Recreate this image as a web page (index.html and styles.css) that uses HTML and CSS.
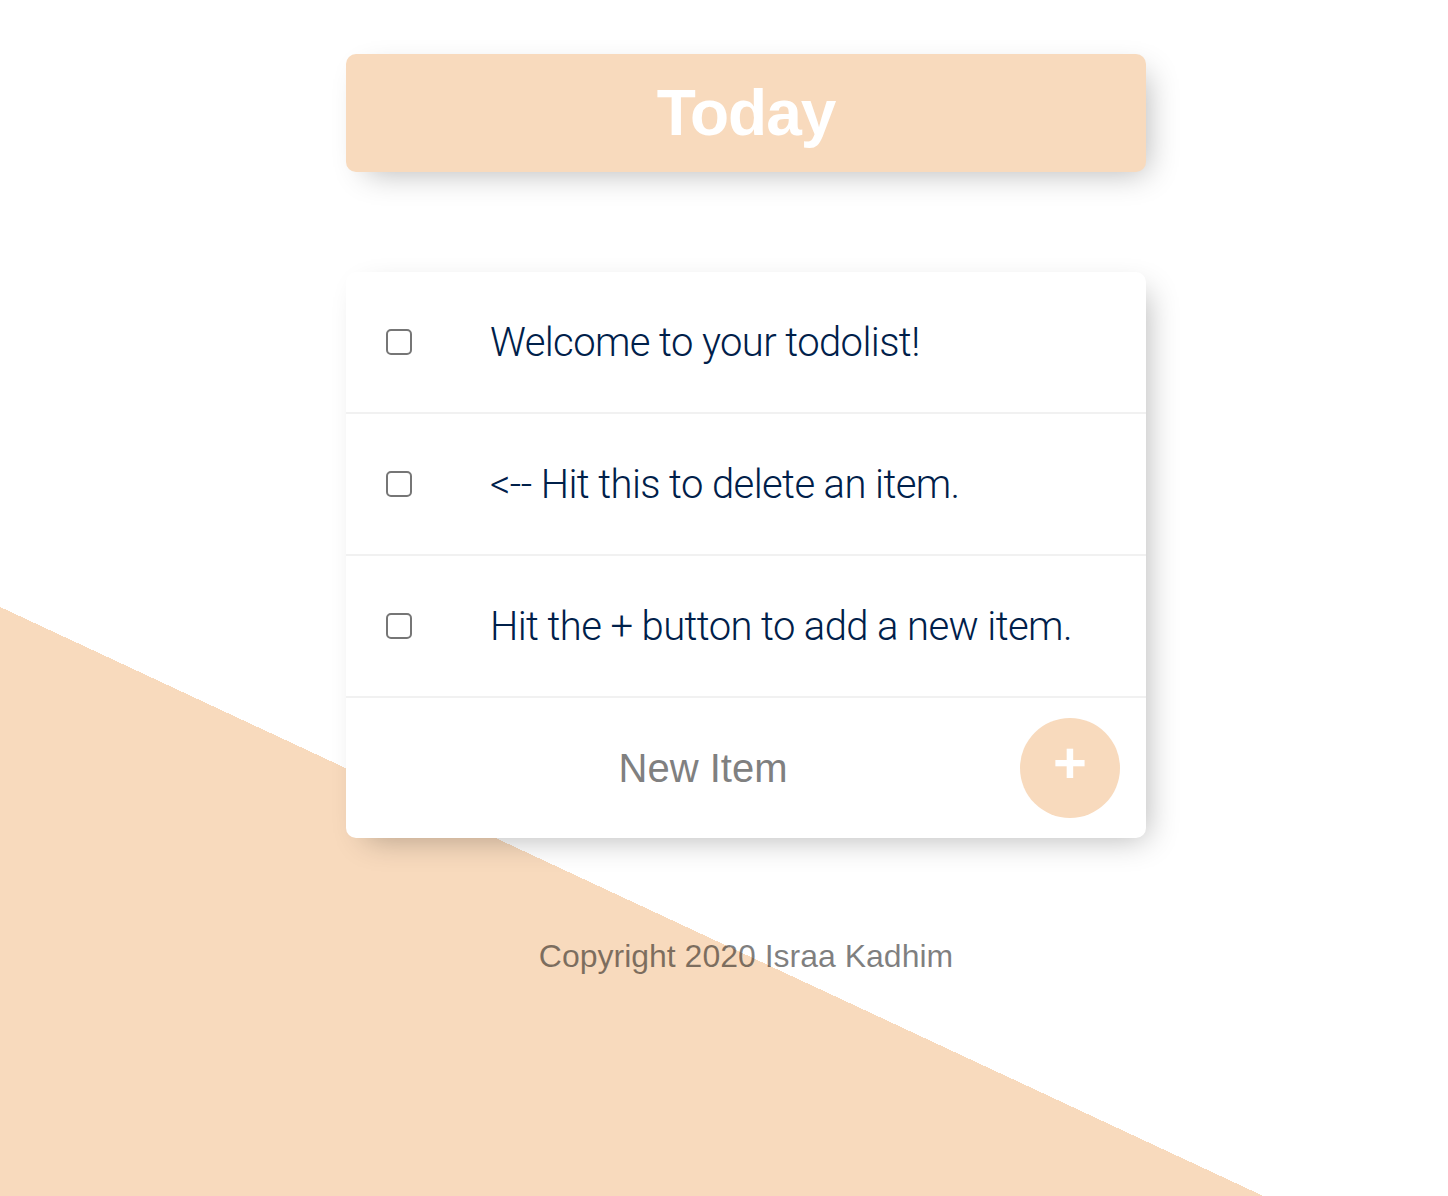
FILE: index.html
```html
<!DOCTYPE html>
<html lang="en">
<head>
<meta charset="utf-8">
<title>To-Do List</title>
<link rel="stylesheet" href="styles.css">
</head>
<body>
  <div class="box heading">
    <h1>Today</h1>
  </div>
  <div class="box list">
    <div class="item">
      <input type="checkbox">
      <p>Welcome to your todolist!</p>
    </div>
    <div class="item">
      <input type="checkbox">
      <p>&lt;-- Hit this to delete an item.</p>
    </div>
    <div class="item">
      <input type="checkbox">
      <p>Hit the + button to add a new item.</p>
    </div>
    <form class="item new-item" action="#">
      <input type="text" name="newItem" placeholder="New Item" autocomplete="off">
      <button type="button" name="list">+</button>
    </form>
  </div>
  <footer class="footer">Copyright 2020 Israa Kadhim</footer>
</body>
</html>
```

FILE: styles.css
```css
html {
  background-color: #fff;
  background-image: linear-gradient(25deg, #F8DABD 50%, #fff 50%);
  background-size: 1448px 1889px;
  background-position: 0 0;
  background-repeat: no-repeat;
  font-family: "Liberation Sans", Arial, sans-serif;
}

body {
  margin: 0;
  padding: 54px 0 0 44px;
}

.box {
  width: 800px;
  margin: 0 auto 100px;
  background: #fff;
  border-radius: 10px;
  box-shadow: 10px 10px 30px -10px rgba(0, 0, 0, 0.3);
}

.heading {
  background-color: #F8DABD;
  text-align: center;
}

.heading h1 {
  margin: 0;
  padding: 20px;
  color: #fff;
  font-size: 64px;
  line-height: 78px;
  font-weight: 700;
  letter-spacing: -1px;
}

.item {
  min-height: 140px;
  display: flex;
  align-items: center;
  border-bottom: 2px solid #F1F1F1;
}

.item:last-child {
  border-bottom: 0;
}

.item input[type="checkbox"] {
  -webkit-appearance: none;
  appearance: none;
  box-sizing: border-box;
  width: 26px;
  height: 26px;
  margin: 40px;
  border: 2px solid #767676;
  border-radius: 5px;
  background: #fff;
  flex: none;
}

.item p {
  margin: 0;
  padding: 40px 40px 40px 38px;
  font-family: Roboto, "Liberation Sans", sans-serif;
  font-size: 40px;
  font-weight: 300;
  letter-spacing: -0.6px;
  color: #00204a;
}

.new-item {
  margin-left: 40px;
  text-align: center;
}

.new-item input[type="text"] {
  box-sizing: border-box;
  width: 634px;
  height: 120px;
  padding: 0;
  border: none;
  background: transparent;
  text-align: center;
  font-family: "Liberation Sans", Arial, sans-serif;
  font-size: 40px;
  color: #555;
  outline: none;
}

.new-item input[type="text"]::placeholder {
  color: #808080;
  opacity: 1;
}

.new-item button {
  width: 100px;
  height: 100px;
  padding: 0 0 10px;
  border: 0;
  border-radius: 50%;
  background-color: #F8DABD;
  color: #fff;
  font-family: "Liberation Sans", Arial, sans-serif;
  font-size: 58px;
  font-weight: 700;
  line-height: 1;
}

.footer {
  text-align: center;
  color: rgba(0, 0, 0, 0.5);
  font-size: 32px;
  line-height: 37px;
  margin-top: -100px;
  padding-top: 100px;
}
```
